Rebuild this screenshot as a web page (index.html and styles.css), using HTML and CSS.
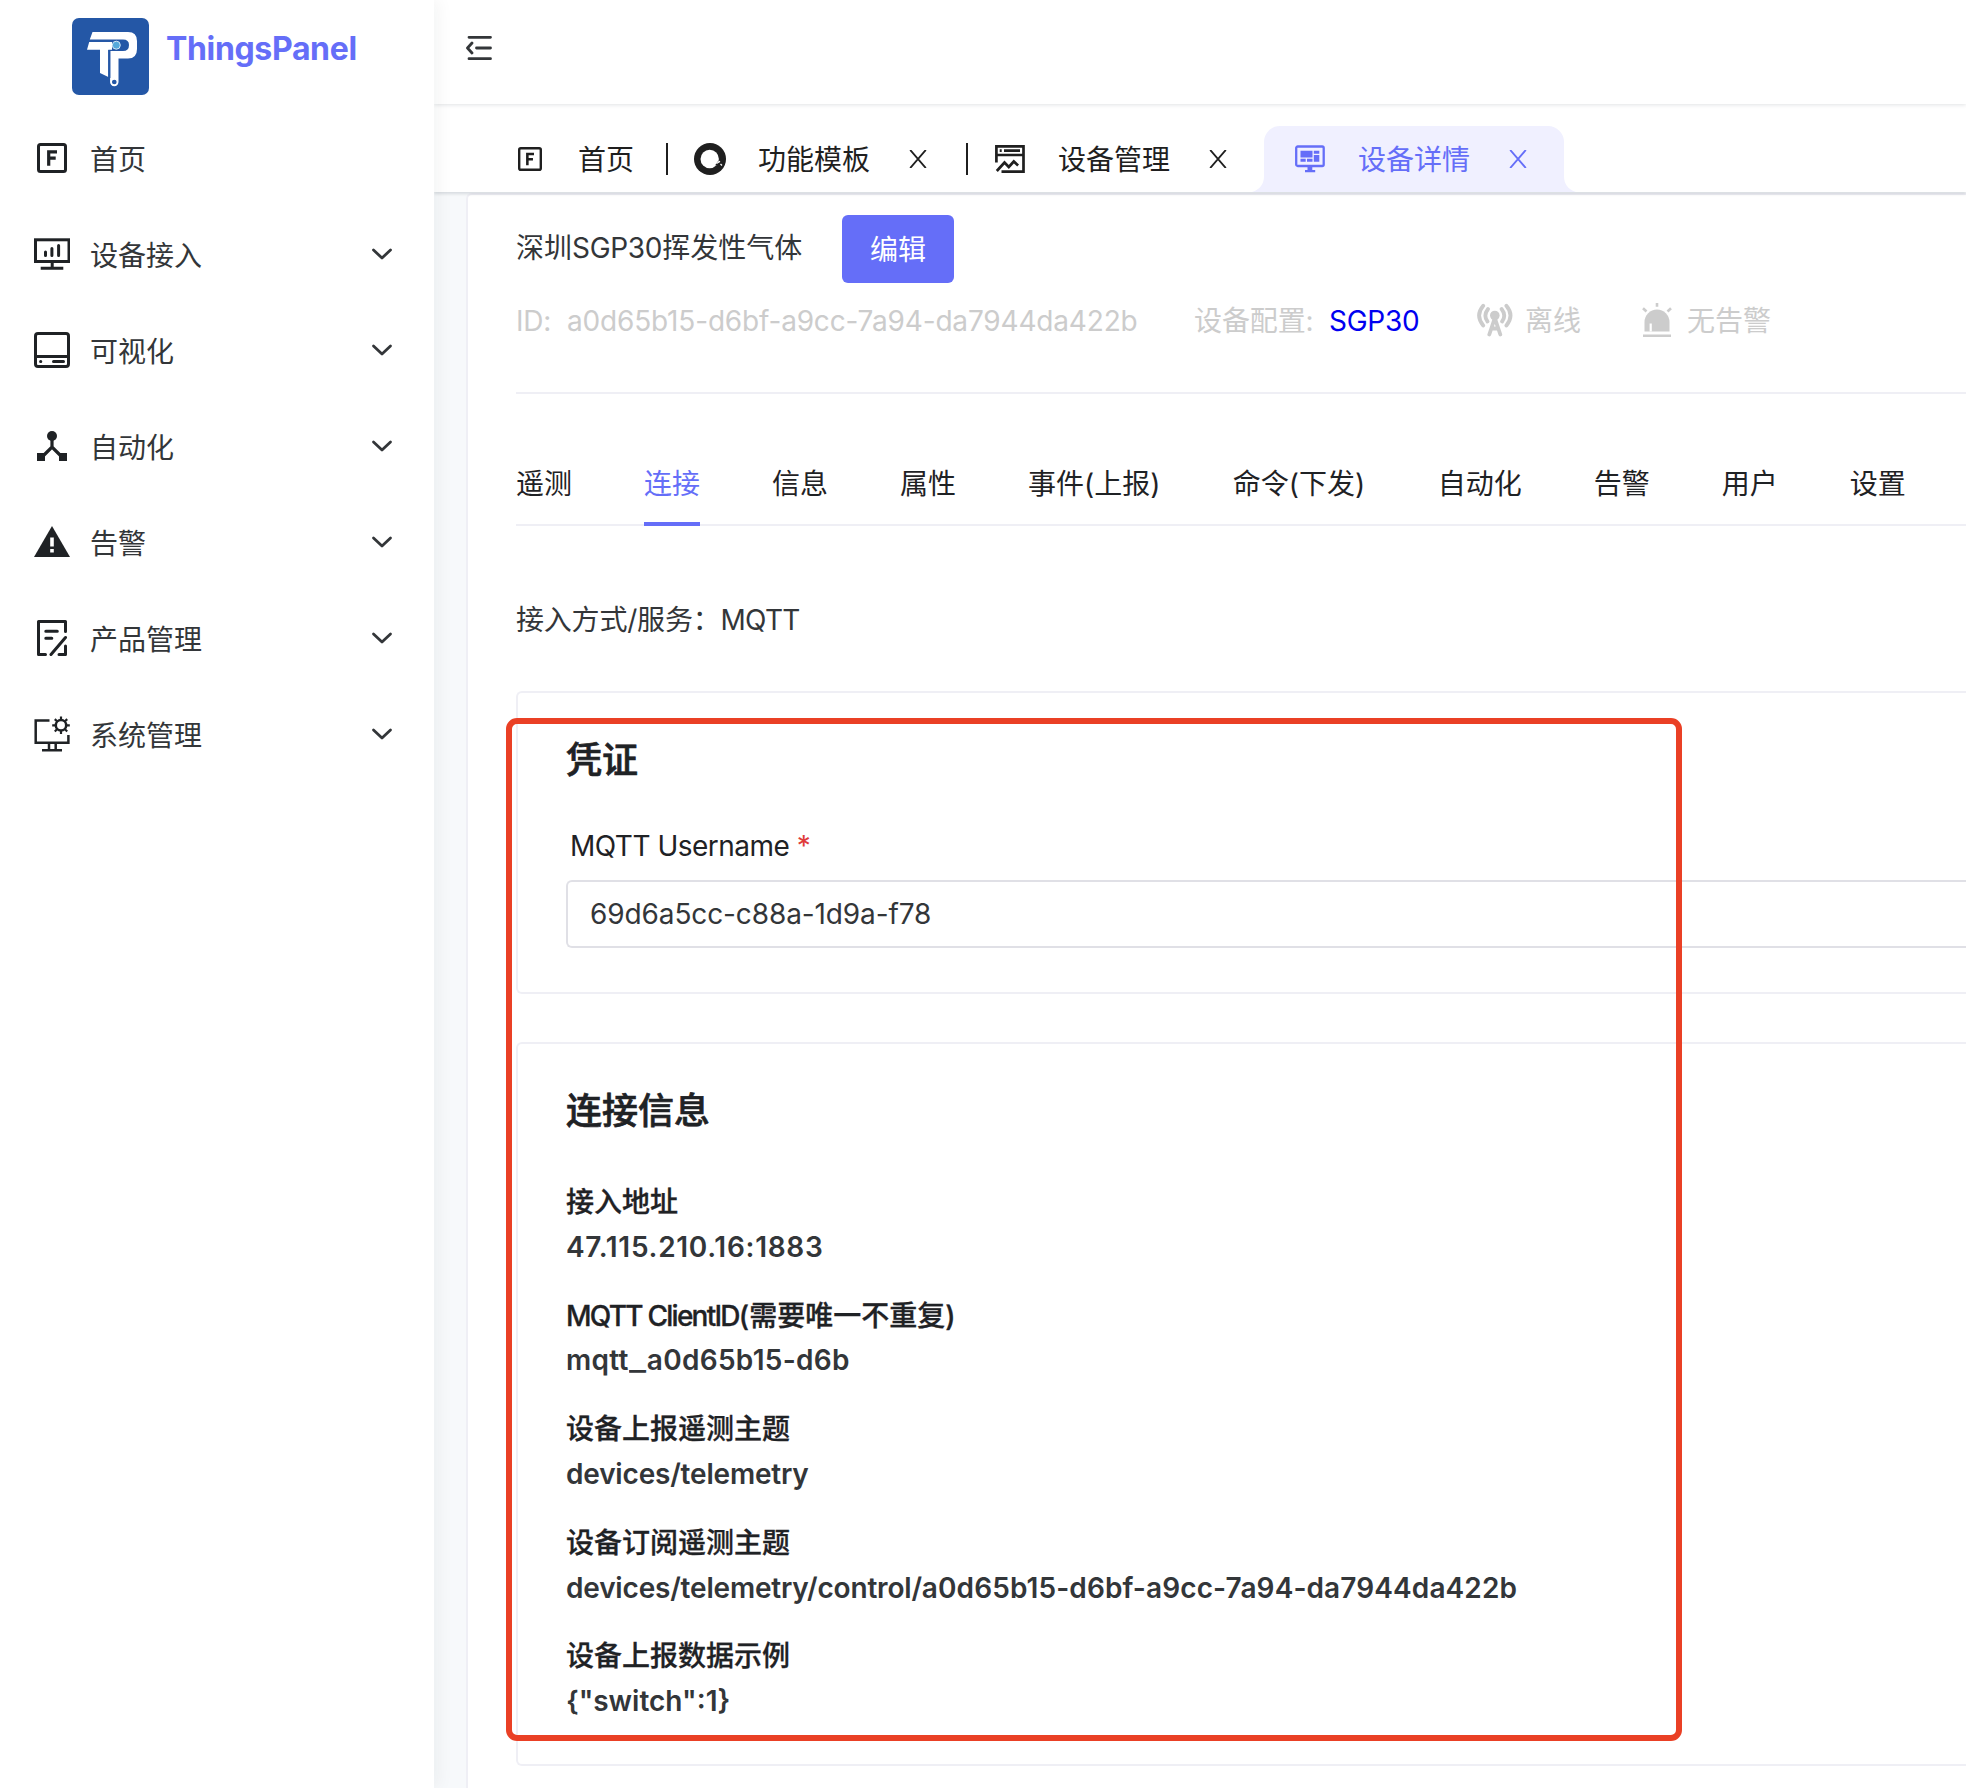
FILE: index.html
```html
<!DOCTYPE html>
<html lang="zh-CN">
<head>
<meta charset="utf-8">
<title>ThingsPanel</title>
<link rel="stylesheet" href="styles.css">
</head>
<body>
<svg class="defs" width="0" height="0">
  <symbol id="chevron" viewBox="0 0 24 24"><path d="M3.500 8l8.500 8 8.500-8" fill="none" stroke="currentColor" stroke-width="2.800" stroke-linecap="round" stroke-linejoin="round"/></symbol>
  <symbol id="home" viewBox="0 0 30 30"><rect x="1.500" y="1.500" width="27" height="27" rx="2" fill="none" stroke="currentColor" stroke-width="3"/><path d="M11.700 22.700V8.800H20M11.700 15.200h7" fill="none" stroke="currentColor" stroke-width="3.200"/></symbol>
  <symbol id="close" viewBox="0 0 18 18"><path d="M1.200 0L16.800 18M16.800 0L1.200 18" fill="none" stroke="currentColor" stroke-width="1.900"/></symbol>
</svg>
<div class="app">
  <aside class="sidebar">
    <div class="brand">
      <svg class="logo" viewBox="0 0 77 77">
        <rect width="77" height="77" rx="7" fill="#2457a6"/>
        <path fill="#fff" d="M20.500 14H56Q65 14 65 23V31Q65 40.500 56 40.500H46.500V64a4.200 4.200 0 0 1-8.400 0V33H51Q57 33 57 27Q57 21.500 51 21.500H17.800z"/>
        <path fill="#fff" d="M17.200 24H40V31.800H36.300V59L28 55V31.800H15z"/>
        <path d="M37.300 32V60" stroke="#2457a6" stroke-width="2.200"/>
        <circle cx="44.300" cy="27.200" r="4" fill="#55a9db" stroke="#d5e7f5" stroke-width="1"/>
        <circle cx="42.300" cy="64" r="3" fill="#2457a6" stroke="#fff" stroke-width="1.300"/>
      </svg>
      <span class="brand-name">ThingsPanel</span>
    </div>
    <nav class="menu">
      <div class="menu-item"><span class="ic"><svg width="30" height="30"><use href="#home"/></svg></span><span class="menu-text">首页</span></div>
      <div class="menu-item"><span class="ic"><svg width="36" height="36" viewBox="0 0 36 36" fill="none" stroke="currentColor" stroke-width="3"><rect x="1.500" y="3.800" width="33.500" height="21.700"/><path d="M18.200 26v6M6.700 32.200h22.600"/><path d="M11.500 16v3.500M17.900 12.500v7M24.600 9.500v10" stroke-linecap="round"/></svg></span><span class="menu-text">设备接入</span><svg class="chev"><use href="#chevron"/></svg></div>
      <div class="menu-item"><span class="ic"><svg width="36" height="36" viewBox="0 0 36 36" fill="none" stroke="currentColor" stroke-width="3"><rect x="1.500" y="1.500" width="33" height="33" rx="2.500"/><path d="M2 24.500h32"/><path d="M6.600 29.500h.2M19.500 29.500h10" stroke-linecap="round"/></svg></span><span class="menu-text">可视化</span><svg class="chev"><use href="#chevron"/></svg></div>
      <div class="menu-item"><span class="ic"><svg width="36" height="36" viewBox="0 0 36 36" fill="currentColor"><circle cx="18" cy="8" r="5"/><path d="M3 25h8v8H3zM25 25h8v8h-8z"/><path d="M18 10v9M8 29l10-10 10 10" fill="none" stroke="currentColor" stroke-width="3.200"/></svg></span><span class="menu-text">自动化</span><svg class="chev"><use href="#chevron"/></svg></div>
      <div class="menu-item"><span class="ic"><svg width="36" height="36" viewBox="0 0 36 36"><path d="M18 2L36 33H0z" fill="currentColor"/><path d="M18 13.500v9M18 25v3.500" stroke="#fff" stroke-width="3.600"/></svg></span><span class="menu-text">告警</span><svg class="chev"><use href="#chevron"/></svg></div>
      <div class="menu-item"><span class="ic"><svg width="36" height="36" viewBox="0 0 36 36" fill="none" stroke="currentColor" stroke-width="3" stroke-linecap="round" stroke-linejoin="round"><path d="M31.500 11.500V1.500H4.500V34.500H11.500M31.500 17.500L17 34.500M31.500 26V34.500H25M11.800 11.300h11.500M11.800 18.200h6"/></svg></span><span class="menu-text">产品管理</span><svg class="chev"><use href="#chevron"/></svg></div>
      <div class="menu-item"><span class="ic"><svg width="36" height="36" viewBox="0 0 36 36" fill="none" stroke="currentColor" stroke-width="2.500"><path d="M15.500 4.500H1.700V26.800H34.400V19M15 27v7M21.700 27v7M8 34.200h20"/><circle cx="27" cy="9.300" r="5.200"/><path d="M27 .5v4M27 14v4M18.200 9.300h4M31.800 9.300h4M20.800 3.100l2.700 2.700M30.500 12.800l2.700 2.700M20.800 15.500l2.700-2.700M30.500 5.800l2.700-2.700" stroke-width="2.200"/></svg></span><span class="menu-text">系统管理</span><svg class="chev"><use href="#chevron"/></svg></div>
    </nav>
  </aside>

  <main class="main">
    <header class="header">
      <svg width="26" height="26" viewBox="0 0 26 26" fill="none" stroke="currentColor" stroke-width="2.800" stroke-linecap="round" stroke-linejoin="round"><path d="M3 2.300h21.500M10.500 13h14M3 23.700h21.500M6 8L1.500 13 6 18"/></svg>
    </header>
    <div class="tabbar">
      <div class="tab tab-home"><span class="tab-ic"><svg width="24" height="24"><use href="#home"/></svg></span><span class="tab-text">首页</span></div>
      <div class="tab divided">
        <span class="tab-ic"><svg width="32" height="32" viewBox="0 0 32 32"><circle cx="16" cy="16" r="16" fill="currentColor"/><circle cx="15.700" cy="16" r="9.200" fill="#fff"/><path d="M24.500 17.500l-3.500 5 3.500-1 3 2.500z" fill="currentColor"/><path d="M22.500 20.500l2.500-1.500M24.500 18l1.500 1M26.500 21l1.500 1.500" stroke="#fff" stroke-width="1.300"/></svg></span>
        <span class="tab-text">功能模板</span><span class="tab-x"><svg width="18" height="18"><use href="#close"/></svg></span>
      </div>
      <div class="tab divided">
        <span class="tab-ic"><svg width="30" height="28" viewBox="0 0 30 28" fill="none" stroke="currentColor" stroke-width="2.700"><path d="M1.400 17.500V1.400H28.500V26.600H6.500M1.500 10h27M4.700 5.600h2M9 5.600h16"/><path d="M1.800 26l7.700-8.500 4.300 4.500 5-5.500 4.300 4"/></svg></span>
        <span class="tab-text">设备管理</span><span class="tab-x"><svg width="18" height="18"><use href="#close"/></svg></span>
      </div>
      <div class="tab active">
        <svg class="curve curve-l" width="16" height="16" viewBox="0 0 16 16"><path d="M16 0v16H4Q16 12 16 0z" fill="currentColor"/></svg>
        <svg class="curve curve-r" width="16" height="16" viewBox="0 0 16 16"><path d="M0 0v16h12Q0 12 0 0z" fill="currentColor"/></svg>
        <span class="tab-ic"><svg width="30" height="28" viewBox="0 0 30 28"><rect x="1.200" y="1.500" width="27.500" height="19.500" rx="1.500" fill="none" stroke="currentColor" stroke-width="2.300"/><path fill="currentColor" d="M5.500 5.800h12v6.600h-12zM18.800 5.800h5.500v3h-5.500zM18.800 10h5.500v6.700h-5.500zM5.500 13.700h5.200v3H5.500zM12 13.700h5.500v3H12zM12.500 21h4.800v4h2.900v2.200H10V25h2.500z"/></svg></span>
        <span class="tab-text">设备详情</span><span class="tab-x"><svg width="18" height="18"><use href="#close"/></svg></span>
      </div>
    </div>

    <div class="content">
      <section class="panel">
        <div class="title-row"><span class="device-name">深圳<span class="sensor">SGP30</span>挥发性气体</span><button class="edit">编辑</button></div>
        <div class="meta">
          <span class="meta-id">ID:</span><span class="meta-uuid">a0d65b15-d6bf-a9cc-7a94-da7944da422b</span>
          <span class="meta-conf">设备配置:</span><a class="meta-link">SGP30</a>
          <span class="meta-state"><svg width="36" height="34" viewBox="0 0 36 34" fill="none" stroke="currentColor" stroke-width="3.800" stroke-linecap="round"><circle cx="17.800" cy="12.500" r="4.800" fill="currentColor" stroke="none"/><path d="M17.800 15L12.300 31.500M17.800 15l5.500 16.500M14.500 25.500h6.500M6.200 2.800Q-2 12.500 6.200 22.500M29.400 2.800Q37.600 12.500 29.400 22.500M11 6Q6 12.500 10.500 18.500M24.600 6Q29.600 12.500 25.100 18.500"/></svg>离线</span>
          <span class="meta-alarm"><svg width="30" height="34" viewBox="0 0 30 34"><path d="M2.500 28.500V19a12.500 12.500 0 0 1 25 0v9.500z" fill="currentColor"/><path d="M8.700 28.500V20.500" stroke="#fff" stroke-width="2.200"/><path d="M15 0v3.800M1 5.200l3.500 3.300M29 5.200l-3.500 3.300M1 32.700h28" stroke="currentColor" stroke-width="2.600"/></svg>无告警</span>
        </div>
        <div class="subtabs">
          <span>遥测</span><span class="on">连接</span><span>信息</span><span>属性</span><span class="wide">事件(上报)</span><span class="wide">命令(下发)</span><span>自动化</span><span>告警</span><span>用户</span><span>设置</span>
        </div>
        <div class="access">接入方式/服务：<span class="protocol">MQTT</span></div>
        <div class="card card-cred">
          <h2>凭证</h2>
          <label class="field-label">MQTT Username <i>*</i></label>
          <div class="input"><span class="input-text">69d6a5cc-c88a-1d9a-f78</span></div>
        </div>
        <div class="card card-info">
          <h2>连接信息</h2>
          <dl>
            <dt>接入地址</dt><dd class="address">47.115.210.16:1883</dd>
            <dt><span class="client">MQTT ClientID</span>(需要唯一不重复)</dt><dd class="client-id">mqtt<span class="underscore">_</span>a0d65b15-d6b</dd>
            <dt>设备上报遥测主题</dt><dd class="topic">devices/telemetry</dd>
            <dt>设备订阅遥测主题</dt><dd><span class="topic">devices/telemetry/control/</span><span class="topic-id">a0d65b15-d6bf-a9cc-7a94-da7944da422b</span></dd>
            <dt>设备上报数据示例</dt><dd>{"switch":1}</dd>
          </dl>
        </div>
      </section>
    </div>
  </main>
  <div class="highlight"></div>
</div>
</body>
</html>
```
FILE: styles.css
```css
* { box-sizing: border-box; }
body {
  margin: 0;
  width: 1966px;
  height: 1788px;
  overflow: hidden;
  background: #fff;
  color: #333639;
  font: 28px/1.6 Inter, "Noto Sans CJK SC", sans-serif;
}
svg { display: block; flex: none; }
.defs { position: absolute; }
.app { position: relative; display: flex; width: 1966px; height: 1788px; overflow: hidden; }

/* sidebar */
.sidebar {
  flex: none;
  width: 434px;
  background: #fff;
  box-shadow: 4px 0 16px rgba(29, 35, 41, .05);
  z-index: 3;
}
.brand { display: flex; height: 116px; padding: 18px 0 0 72px; gap: 17px; }
.logo { width: 77px; height: 77px; }
.brand-name { color: #656ef8; font-size: 32px; font-weight: 700; line-height: 62px; letter-spacing: -.35px; white-space: nowrap; }
.menu { display: flex; flex-direction: column; gap: 12px; }
.menu-item { display: flex; align-items: center; height: 84px; padding: 0 40px 0 34px; }
.ic { display: flex; justify-content: center; width: 36px; margin-right: 20px; color: #1f2225; }
.menu-text { flex: 1; padding-top: 3px; line-height: 44px; }
.chev { width: 24px; height: 24px; }

/* top bars */
.main { flex: 1; display: flex; flex-direction: column; min-width: 0; background: #f7f9fb; }
.header {
  flex: none;
  height: 104px;
  padding: 35px 0 0 32px;
  background: #fff;
  box-shadow: 0 1px 4px rgba(0, 21, 41, .12);
  z-index: 2;
}
.tabbar {
  flex: none;
  display: flex;
  align-items: flex-end;
  height: 88px;
  padding-left: 50px;
  background: #fff;
  color: #1f1f1f;
  box-shadow: 0 2px 3px rgba(0, 21, 41, .13);
  z-index: 1;
}
.tab { position: relative; display: flex; align-items: center; width: 300px; height: 66px; padding: 0 30px; }
.tab-home { width: 180px; }
.tab-ic { display: flex; justify-content: center; width: 32px; margin-right: 32px; }
.tab-text { padding-top: 2px; line-height: 44px; white-space: nowrap; }
.tab-x { display: flex; justify-content: center; width: 32px; margin-left: 32px; }
.divided::before { content: ""; position: absolute; left: 2px; top: 17px; width: 2px; height: 32px; background: #1f1f1f; }
.active { background: #f0f0ff; border-radius: 16px 16px 0 0; color: #656ef8; }
.curve { position: absolute; bottom: 0; color: #f0f0ff; }
.curve-l { left: -16px; }
.curve-r { right: -16px; }

/* panel */
.content { flex: 1; padding: 1px 0 0 32px; }
.panel {
  height: 1640px;
  padding: 20px 0 0 48px;
  background: #fff;
  border: 2px solid #efeff5;
  border-right: 0;
  border-radius: 6px 0 0 0;
}
.title-row { display: flex; align-items: center; height: 68px; }
.device-name { width: 326px; white-space: nowrap; padding-bottom: 2px; }
.sensor { letter-spacing: -.3px; }
.edit { width: 112px; height: 68px; padding: 2px 0 0; border: 0; border-radius: 6px; background: #656ef8; color: #fff; font: inherit; }
.meta {
  display: flex;
  align-items: center;
  height: 111px;
  padding-bottom: 32px;
  border-bottom: 2px solid #efeff5;
  color: #ccc;
  white-space: nowrap;
}
.meta-id { width: 51px; letter-spacing: -.3px; }
.meta-uuid { width: 627px; letter-spacing: -.17px; }
.meta-conf { width: 135px; letter-spacing: -.1px; }
.meta-link { width: 148px; color: #0000f0; letter-spacing: -.25px; }
.meta-state, .meta-alarm { display: flex; align-items: center; }
.meta-state { width: 165px; gap: 12px; }
.meta-alarm { gap: 15px; }
.meta-state svg, .meta-alarm svg { margin-top: -3px; }
.subtabs {
  display: flex;
  gap: 72px;
  height: 132px;
  padding-top: 56px;
  border-bottom: 2px solid #efeff5;
  color: #1f2225;
  line-height: 68px;
  white-space: nowrap;
}
.subtabs .on { height: 76px; border-bottom: 4px solid #656ef8; color: #656ef8; }
.subtabs .wide { width: 132.800px; }
.access { height: 165px; padding-top: 72px; line-height: 44px; letter-spacing: -.2px; }
.protocol { letter-spacing: -.7px; }

.card { border: 2px solid #efeff5; border-right: 0; border-radius: 6px 0 0 6px; padding-left: 48px; color: #1f2225; }
.card h2 { margin: 0; padding-top: 1px; font-size: 36px; line-height: 57px; font-weight: 500; -webkit-text-stroke: .7px currentColor; }
.card-cred { height: 303px; padding-top: 38px; margin-bottom: 48px; }
.field-label { display: block; height: 91px; margin-left: 4px; padding-top: 35px; line-height: 44px; letter-spacing: -.5px; }
.field-label i { color: #e03b3b; font-style: normal; }
.input { display: flex; align-items: center; height: 68px; padding-left: 22px; border: 2px solid #e0e0e6; border-right: 0; border-radius: 6px 0 0 6px; color: #333639; letter-spacing: -.11px; }
.card-info { height: 724px; padding-top: 38px; }
dl { margin: 40px 0 0; font-weight: 600; line-height: 44.800px; white-space: nowrap; }
dt { font-weight: 500; -webkit-text-stroke: .3px currentColor; }
dd { margin: 0 0 24px; color: #333639; }
.client { letter-spacing: -1.750px; }
.address { letter-spacing: .7px; }
.client-id { letter-spacing: .3px; }
.underscore { display: inline-block; width: 18px; transform: scaleX(1.300); transform-origin: 0 0; }
.topic { letter-spacing: -.19px; }
.topic-id { letter-spacing: .11px; }

/* red annotation frame */
.highlight { position: absolute; left: 506px; top: 717.500px; width: 1176px; height: 1023.500px; border: 6px solid #ea4025; border-radius: 11px; z-index: 5; }
```
